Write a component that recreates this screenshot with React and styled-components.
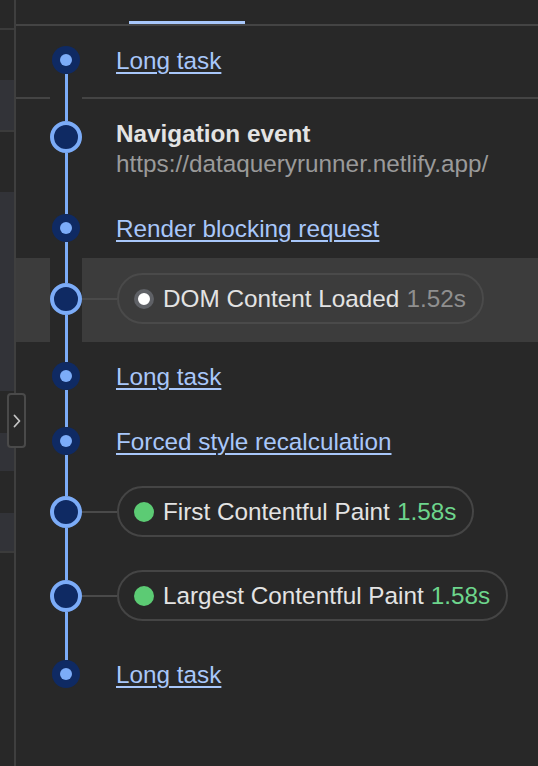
import React from 'react';
import styled, { createGlobalStyle } from 'styled-components';

const GlobalStyle = createGlobalStyle`
  html, body {
    margin: 0;
    padding: 0;
    background: #282828;
  }
  body {
    font-family: "Liberation Sans", Arial, sans-serif;
  }
`;

const Frame = styled.div`
  position: relative;
  display: flex;
  width: 538px;
  height: 766px;
  overflow: hidden;
  background: #282828;
`;

const Strip = styled.div`
  display: flex;
  flex: none;
  flex-direction: column;
  width: 14px;
`;

const stripColors = {
  dark: '#282828',
  slate: '#323338',
  line: '#3b3b3b',
};

const StripBlock = styled.div`
  flex: ${(props) => (props.$grow ? '1' : 'none')};
  height: ${(props) => props.$h}px;
  background: ${(props) => stripColors[props.$kind]};
`;

const Divider = styled.div`
  flex: none;
  width: 2px;
  background: #3f3f3f;
`;

const Toggle = styled.button`
  position: absolute;
  left: 7px;
  top: 393px;
  display: flex;
  align-items: center;
  justify-content: center;
  box-sizing: border-box;
  width: 19px;
  height: 55px;
  padding: 0;
  border: 2px solid #4a4a4a;
  border-radius: 4px;
  background: #282828;
  cursor: pointer;
`;

const Main = styled.div`
  display: flex;
  flex: 1;
  flex-direction: column;
`;

const Header = styled.div`
  display: flex;
  flex: none;
  align-items: flex-end;
  height: 24px;
  padding-left: 113px;
  border-bottom: 2px solid #444444;
`;

const TabLine = styled.div`
  width: 116px;
  height: 3px;
  background: #a8c7fa;
`;

const Row = styled.div`
  display: grid;
  flex: ${(props) => (props.$last ? '1' : 'none')};
  grid-template-columns: 34px 32px 1fr;
  height: ${(props) => props.$h}px;
`;

const Pad = styled.div`
  box-sizing: border-box;
  background: ${(props) => (props.$hl ? '#3c3c3c' : 'transparent')};
  border-bottom: ${(props) => (props.$sep ? '2px solid #444444' : 'none')};
`;

const Gutter = styled.div`
  display: flex;
  flex-direction: column;
  align-items: center;
`;

const Segment = styled.div`
  flex: ${(props) => (props.$grow ? '1' : 'none')};
  width: 3px;
  height: ${(props) => (props.$grow ? 'auto' : `${props.$h}px`)};
  background: ${(props) => (props.$hidden ? 'transparent' : '#7cacf8')};
`;

const SmallNode = styled.div`
  display: flex;
  flex: none;
  align-items: center;
  justify-content: center;
  width: 28px;
  height: 28px;
  border-radius: 50%;
  background: #0f2a63;
  &::after {
    content: '';
    width: 12px;
    height: 12px;
    border-radius: 50%;
    background: #7cacf8;
  }
`;

const BigNode = styled.div`
  flex: none;
  box-sizing: border-box;
  width: 32px;
  height: 32px;
  border: 4px solid #7cacf8;
  border-radius: 50%;
  background: #0f2a63;
`;

const Content = styled.div`
  display: flex;
  flex-direction: column;
  box-sizing: border-box;
  min-width: 0;
  padding-top: ${(props) => props.$top}px;
  padding-left: ${(props) => (props.$pill ? 0 : 34)}px;
  background: ${(props) => (props.$hl ? '#3c3c3c' : 'transparent')};
  border-bottom: ${(props) => (props.$sep ? '2px solid #444444' : 'none')};
`;

const EventLink = styled.a`
  width: fit-content;
  color: #a8c7fa;
  font-size: 24.3px;
  line-height: 28px;
  text-decoration: underline;
  text-decoration-thickness: 2px;
  text-underline-offset: 3px;
  white-space: nowrap;
  cursor: pointer;
`;

const NavTitle = styled.div`
  color: #e3e3e3;
  font-size: 24.3px;
  font-weight: bold;
  line-height: 30px;
  white-space: nowrap;
`;

const NavUrl = styled.div`
  color: #9a9a9a;
  font-size: 24.3px;
  line-height: 30px;
  white-space: nowrap;
`;

const PillLine = styled.div`
  display: flex;
  align-items: center;
  height: 51px;
`;

const Connector = styled.div`
  flex: none;
  width: 35px;
  height: 2px;
  background: #4a4a4a;
`;

const Pill = styled.div`
  display: flex;
  flex: none;
  align-items: center;
  gap: 9px;
  box-sizing: border-box;
  height: 51px;
  padding: 0 16px 0 15px;
  border: 2px solid ${(props) => (props.$hl ? '#4a4a4a' : '#454545')};
  border-radius: 26px;
  color: #e3e3e3;
  font-size: 24.3px;
  white-space: nowrap;
`;

const Dot = styled.span`
  flex: none;
  box-sizing: border-box;
  width: 20px;
  height: 20px;
  border-radius: 50%;
  ${(props) =>
    props.$tone === 'good'
      ? 'background: #5ccb74;'
      : 'background: #ffffff; border: 4px solid #5f6166;'}
`;

const Value = styled.span`
  margin-left: 7px;
  color: ${(props) => (props.$tone === 'good' ? '#6dd58c' : '#8f8f8f')};
`;

const events = [
  { kind: 'link', label: 'Long task', h: 73, c: 34, sep: true },
  {
    kind: 'nav',
    title: 'Navigation event',
    url: 'https://dataqueryrunner.netlify.app/',
    h: 91,
    c: 38,
  },
  { kind: 'link', label: 'Render blocking request', h: 68, c: 38 },
  { kind: 'pill', label: 'DOM Content Loaded', value: '1.52s', tone: 'neutral', h: 84, c: 41, hl: true },
  { kind: 'link', label: 'Long task', h: 66, c: 34 },
  { kind: 'link', label: 'Forced style recalculation', h: 66, c: 33 },
  { kind: 'pill', label: 'First Contentful Paint', value: '1.58s', tone: 'good', h: 80, c: 38 },
  { kind: 'pill', label: 'Largest Contentful Paint', value: '1.58s', tone: 'good', h: 82, c: 42 },
  { kind: 'link', label: 'Long task', h: 130, c: 38 },
];

const strip = [
  ['dark', 28],
  ['line', 2],
  ['dark', 50],
  ['slate', 50],
  ['line', 2],
  ['dark', 60],
  ['slate', 199],
  ['dark', 42],
  ['slate', 38],
  ['dark', 42],
  ['slate', 38],
  ['line', 2],
];

function contentTop(event) {
  if (event.kind === 'pill') return event.c - 26;
  if (event.kind === 'nav') return event.c - 18;
  return event.c - 13;
}

function TimelineRow({ event, first, last }) {
  const big = event.kind !== 'link';
  const nodeSize = big ? 32 : 28;
  return (
    <Row $h={event.h} $last={last}>
      <Pad $hl={event.hl} $sep={event.sep} />
      <Gutter>
        <Segment $h={event.c - nodeSize / 2} $hidden={first} />
        {big ? <BigNode /> : <SmallNode />}
        <Segment $grow $hidden={last} />
      </Gutter>
      <Content
        $top={contentTop(event)}
        $pill={event.kind === 'pill'}
        $hl={event.hl}
        $sep={event.sep}
      >
        {event.kind === 'link' && <EventLink>{event.label}</EventLink>}
        {event.kind === 'nav' && (
          <>
            <NavTitle>{event.title}</NavTitle>
            <NavUrl>{event.url}</NavUrl>
          </>
        )}
        {event.kind === 'pill' && (
          <PillLine>
            <Connector />
            <Pill $hl={event.hl}>
              <Dot $tone={event.tone} />
              <span>
                {event.label}
                <Value $tone={event.tone}>{event.value}</Value>
              </span>
            </Pill>
          </PillLine>
        )}
      </Content>
    </Row>
  );
}

export default function App() {
  return (
    <>
      <GlobalStyle />
      <Frame>
        <Strip>
          {strip.map(([kind, h], i) => (
            <StripBlock key={i} $kind={kind} $h={h} />
          ))}
          <StripBlock $kind="dark" $grow />
        </Strip>
        <Divider />
        <Toggle type="button" aria-label="Expand sidebar">
          <svg width="8" height="14" viewBox="0 0 8 14" fill="none">
            <path d="M1.5 1.5 L6.5 7 L1.5 12.5" stroke="#c4c4c4" strokeWidth="1.8" strokeLinecap="round" strokeLinejoin="round" />
          </svg>
        </Toggle>
        <Main>
          <Header>
            <TabLine />
          </Header>
          {events.map((event, i) => (
            <TimelineRow
              key={i}
              event={event}
              first={i === 0}
              last={i === events.length - 1}
            />
          ))}
        </Main>
      </Frame>
    </>
  );
}
